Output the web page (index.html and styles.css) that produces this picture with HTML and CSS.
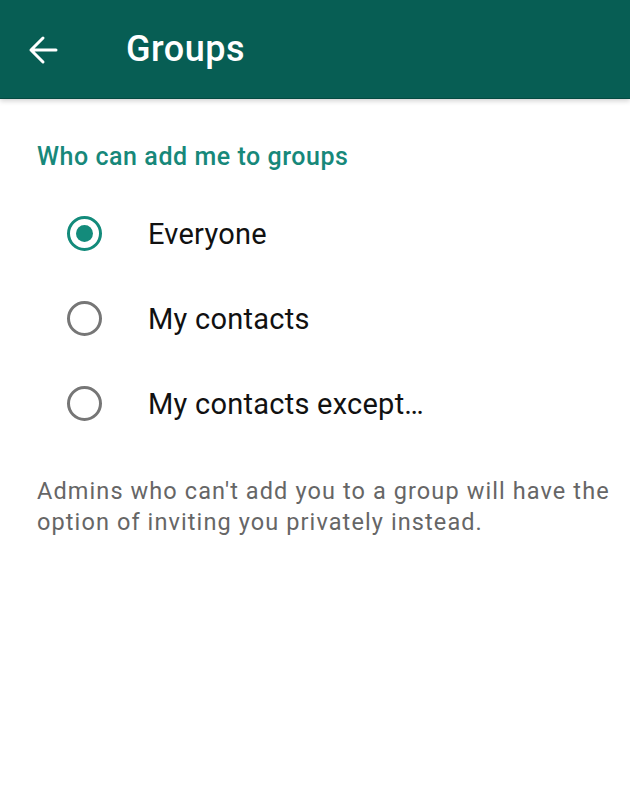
FILE: index.html
```html
<!DOCTYPE html>
<html>
<head>
<meta charset="utf-8">
<link rel="stylesheet" href="styles.css">
</head>
<body>
<header class="appbar">
  <svg class="back" width="30" height="30" viewBox="0 0 30 30" aria-hidden="true">
    <path d="M28 15H3M15 3L3 15l12 12" fill="none" stroke="#fff" stroke-width="3" stroke-linecap="round" stroke-linejoin="round"/>
  </svg>
  <h1 class="title">Groups</h1>
</header>
<main class="content">
  <h2 class="section">Who can add me to groups</h2>
  <ul class="options">
    <li class="option"><span class="radio checked"></span><span class="label">Everyone</span></li>
    <li class="option"><span class="radio"></span><span class="label">My contacts</span></li>
    <li class="option"><span class="radio"></span><span class="label">My contacts except…</span></li>
  </ul>
  <p class="note">Admins who can't add you to a group will have the option of inviting you privately instead.</p>
</main>
</body>
</html>
```
FILE: styles.css
```css
html, body {
  margin: 0;
  padding: 0;
  background: #fff;
  font-family: Roboto, "Noto Sans", sans-serif;
}
.appbar {
  height: 98px;
  background: #075e54;
  display: flex;
  align-items: center;
  box-shadow: 0 1px 0 #044a41, 0 3px 5px rgba(0,0,0,0.18);
  position: relative;
}
.back {
  margin-left: 28px;
  margin-top: 2px;
  flex: none;
}
.title {
  margin: 0 0 0 68px;
  color: #fff;
  font-size: 36px;
  font-weight: 500;
  letter-spacing: 0.5px;
}
.content {
  padding: 0 0 0 37px;
}
.section {
  margin: 0;
  padding-top: 44px;
  color: #17887a;
  font-size: 25px;
  font-weight: 500;
  line-height: 30px;
  letter-spacing: 0.55px;
}
.options {
  list-style: none;
  margin: 0;
  padding: 0;
  padding-top: 19px;
}
.option {
  display: flex;
  align-items: center;
  height: 85px;
}
.radio {
  box-sizing: border-box;
  width: 35px;
  height: 35px;
  border-radius: 50%;
  border: 3px solid #767676;
  margin-left: 30px;
  display: flex;
  align-items: center;
  justify-content: center;
  flex: none;
}
.radio.checked {
  border-color: #138b7b;
}
.radio.checked::after {
  content: "";
  width: 17px;
  height: 17px;
  border-radius: 50%;
  background: #138b7b;
}
.label {
  margin-left: 46px;
  font-size: 29px;
  letter-spacing: 0.25px;
  color: #111;
}
.note {
  margin: 0;
  padding-top: 30px;
  padding-right: 8px;
  font-size: 23.5px;
  line-height: 31px;
  letter-spacing: 1.1px;
  color: #666;
}
```
